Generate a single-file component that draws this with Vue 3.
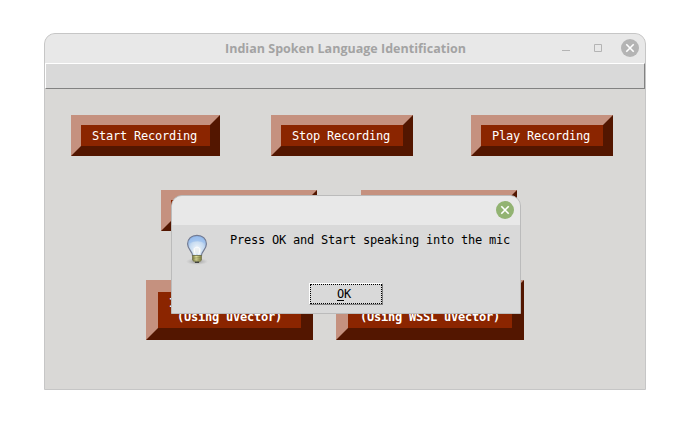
<script setup>
const rows = [
  { name: 'record', buttons: [['Start Recording'], ['Stop Recording'], ['Play Recording']] },
  { name: 'process', buttons: [[], []] },
  { name: 'identify', buttons: [['I', '(Using uVector)'], ['', '(Using WSSL uVector)']] },
]
</script>

<template>
  <main class="desktop">
    <section class="window">
      <header class="titlebar">
        <svg class="title" width="242" height="20">
          <text x="0" y="14" textLength="241">Indian Spoken Language Identification</text>
        </svg>
        <div class="controls">
          <svg width="8" height="8" viewBox="0 0 8 8"><path d="M0 6.5H8" stroke="#b4b4b4" /></svg>
          <svg width="8" height="8" viewBox="0 0 8 8"><path d="M.5.5H7.5V7.5H.5Z" fill="none" stroke="#b4b4b4" /></svg>
          <svg width="18" height="18" viewBox="0 0 18 18">
            <circle cx="9" cy="9" r="9" fill="#b4b4b4" />
            <path d="M5.3 5.3L12.7 12.7M12.7 5.3L5.3 12.7" stroke="#fff" stroke-width="1.6" />
          </svg>
        </div>
      </header>
      <nav class="menubar"></nav>
      <div v-for="row in rows" :key="row.name" class="row" :class="row.name">
        <button v-for="(lines, i) in row.buttons" :key="i" class="bevel">
          <span v-for="(line, n) in lines" :key="n" class="line">{{ line }}</span>
        </button>
      </div>
    </section>

    <section class="dialog">
      <header class="dialog-title">
        <svg width="18" height="18" viewBox="0 0 18 18">
          <circle cx="9" cy="9" r="9" fill="#92b372" />
          <path d="M5.3 5.3L12.7 12.7M12.7 5.3L5.3 12.7" stroke="#fff" stroke-width="1.6" />
        </svg>
      </header>
      <div class="message">
        <svg class="bulb" width="26" height="32" viewBox="0 0 26 32">
          <defs>
            <radialGradient id="glass" cx=".5" cy=".65" r=".65">
              <stop offset="0" stop-color="#eef4fa" />
              <stop offset=".55" stop-color="#c6dbf1" />
              <stop offset="1" stop-color="#84ade4" />
            </radialGradient>
            <radialGradient id="shade">
              <stop offset="0" stop-color="#777" stop-opacity=".7" />
              <stop offset="1" stop-color="#999" stop-opacity="0" />
            </radialGradient>
            <linearGradient id="brass">
              <stop offset="0" stop-color="#74743a" />
              <stop offset=".4" stop-color="#e3e3a0" />
              <stop offset="1" stop-color="#7d7d3c" />
            </linearGradient>
          </defs>
          <ellipse cx="13" cy="28.5" rx="11" ry="3.4" fill="url(#shade)" />
          <path d="M8.5 22.5C8.5 18.5 3.6 16.5 3.6 11C3.6 5.7 7.5 2.3 13 2.3S22.4 5.7 22.4 11C22.4 16.5 17.5 18.5 17.5 22.5Z" fill="url(#glass)" stroke="#747b91" stroke-width="1.2" />
          <path d="M5.3 10.5C5.5 6.6 8.5 3.8 13 3.8S20.5 6.6 20.7 10.5C17 7.5 10 7.5 5.3 10.5Z" fill="#9bbfed" opacity=".75" />
          <path d="M9 21L8.5 17L13 14.5L17.5 17L16.5 21Z" fill="#f3f4f0" fill-opacity=".6" />
          <path d="M11.2 22L10 15.5L13 14L16 15.5L14.8 22" fill="none" stroke="#fff" stroke-width=".9" />
          <path d="M8.5 22.5H17.5V27L15.5 29H10.5L8.5 27Z" fill="url(#brass)" stroke="#66663b" stroke-width=".6" />
          <path d="M8.7 25.2L17.3 24.6M9 27.4L17 26.8" stroke="#77774a" stroke-width=".6" />
          <path d="M11 29.2H15" stroke="#333" stroke-width="1.3" />
        </svg>
        <p class="prompt">Press OK and Start speaking into the mic</p>
      </div>
      <button class="ok"><span class="focus"><span class="label"><span class="key">O</span>K</span></span></button>
    </section>
  </main>
</template>

<style>
body {
  margin: 0;
  background: #fff;
}
</style>

<style scoped>
* {
  box-sizing: border-box;
}
.desktop {
  position: relative;
  width: 697px;
  height: 437px;
  padding: 33px 0 0 44px;
  overflow: hidden;
  font: 12px/15px "DejaVu Sans Mono", monospace;
  letter-spacing: -0.224px;
}
button {
  margin: 0;
  padding: 0;
  font: inherit;
  letter-spacing: inherit;
}
.window {
  width: 602px;
  height: 357px;
  border: 1px solid #c6c6c6;
  border-radius: 11px 11px 0 0;
  background: #d9d8d6;
  overflow: hidden;
}
.titlebar {
  display: flex;
  height: 29px;
  padding: 5px 6px 0 180px;
  justify-content: space-between;
  background: #e8e8e8;
}
.title text {
  font: 700 12.5px "Open Sans", sans-serif;
  letter-spacing: 0;
  fill: #a3a3a3;
}
.controls {
  display: flex;
  height: 18px;
  gap: 24px;
  align-items: center;
}
.controls svg:last-child {
  margin-left: -5px;
}
.menubar {
  height: 26px;
  background: #d9d9d9;
  border: 1px solid;
  border-color: #fff #828282 #828282 #fff;
}
.row {
  display: grid;
  grid-template-columns: repeat(3, 200px);
  justify-items: start;
  height: 41px;
}
.record {
  margin: 26px 0 34px 26px;
}
.process {
  margin: 0 0 49px 116px;
}
.identify {
  grid-template-columns: repeat(2, 190px);
  height: 60px;
  margin-left: 101px;
  font-weight: bold;
}
.bevel {
  display: flex;
  flex-direction: column;
  align-items: center;
  justify-content: center;
  height: 100%;
  padding: 2px 13px 0 11px;
  border: 10px solid;
  border-color: #c5917f #531600 #531600 #c5917f;
  border-radius: 0;
  background: #8b2500;
  color: #fff;
  white-space: pre;
}
.process .bevel {
  width: 156px;
}
.identify .bevel {
  width: 167px;
  border-width: 12px;
  padding: 0;
}
.identify .bevel:last-child {
  width: 188px;
}
.identify .line {
  height: 14px;
  line-height: 14px;
  min-width: 119px;
  text-align: center;
}
.identify .line:first-child {
  margin-left: -2px;
  text-align: left;
}
.dialog {
  position: absolute;
  left: 171px;
  top: 195px;
  width: 350px;
  height: 119px;
  border: 1px solid #bbb;
  border-radius: 11px 11px 0 0;
  background: #d9d9d9;
  overflow: hidden;
}
.dialog-title {
  display: flex;
  justify-content: flex-end;
  height: 29px;
  padding: 5px 6px 0 0;
  background: #e8e8e8;
}
.message {
  display: flex;
  height: 58px;
  padding: 8px 0 0 12px;
  gap: 20px;
}
.prompt {
  margin: 0;
  white-space: pre;
  color: #000;
}
.ok {
  display: block;
  width: 74px;
  height: 22px;
  margin-left: 137px;
  border: 1px solid;
  border-color: #fff #828282 #828282 #fff;
  background: #d9d9d9;
  color: #000;
}
.focus {
  display: flex;
  height: 20px;
  align-items: center;
  justify-content: center;
  border: 1px dotted #000;
}
.label {
  display: flex;
  margin-right: 4px;
}
.key {
  height: 14px;
  border-bottom: 1px solid #000;
}
</style>
